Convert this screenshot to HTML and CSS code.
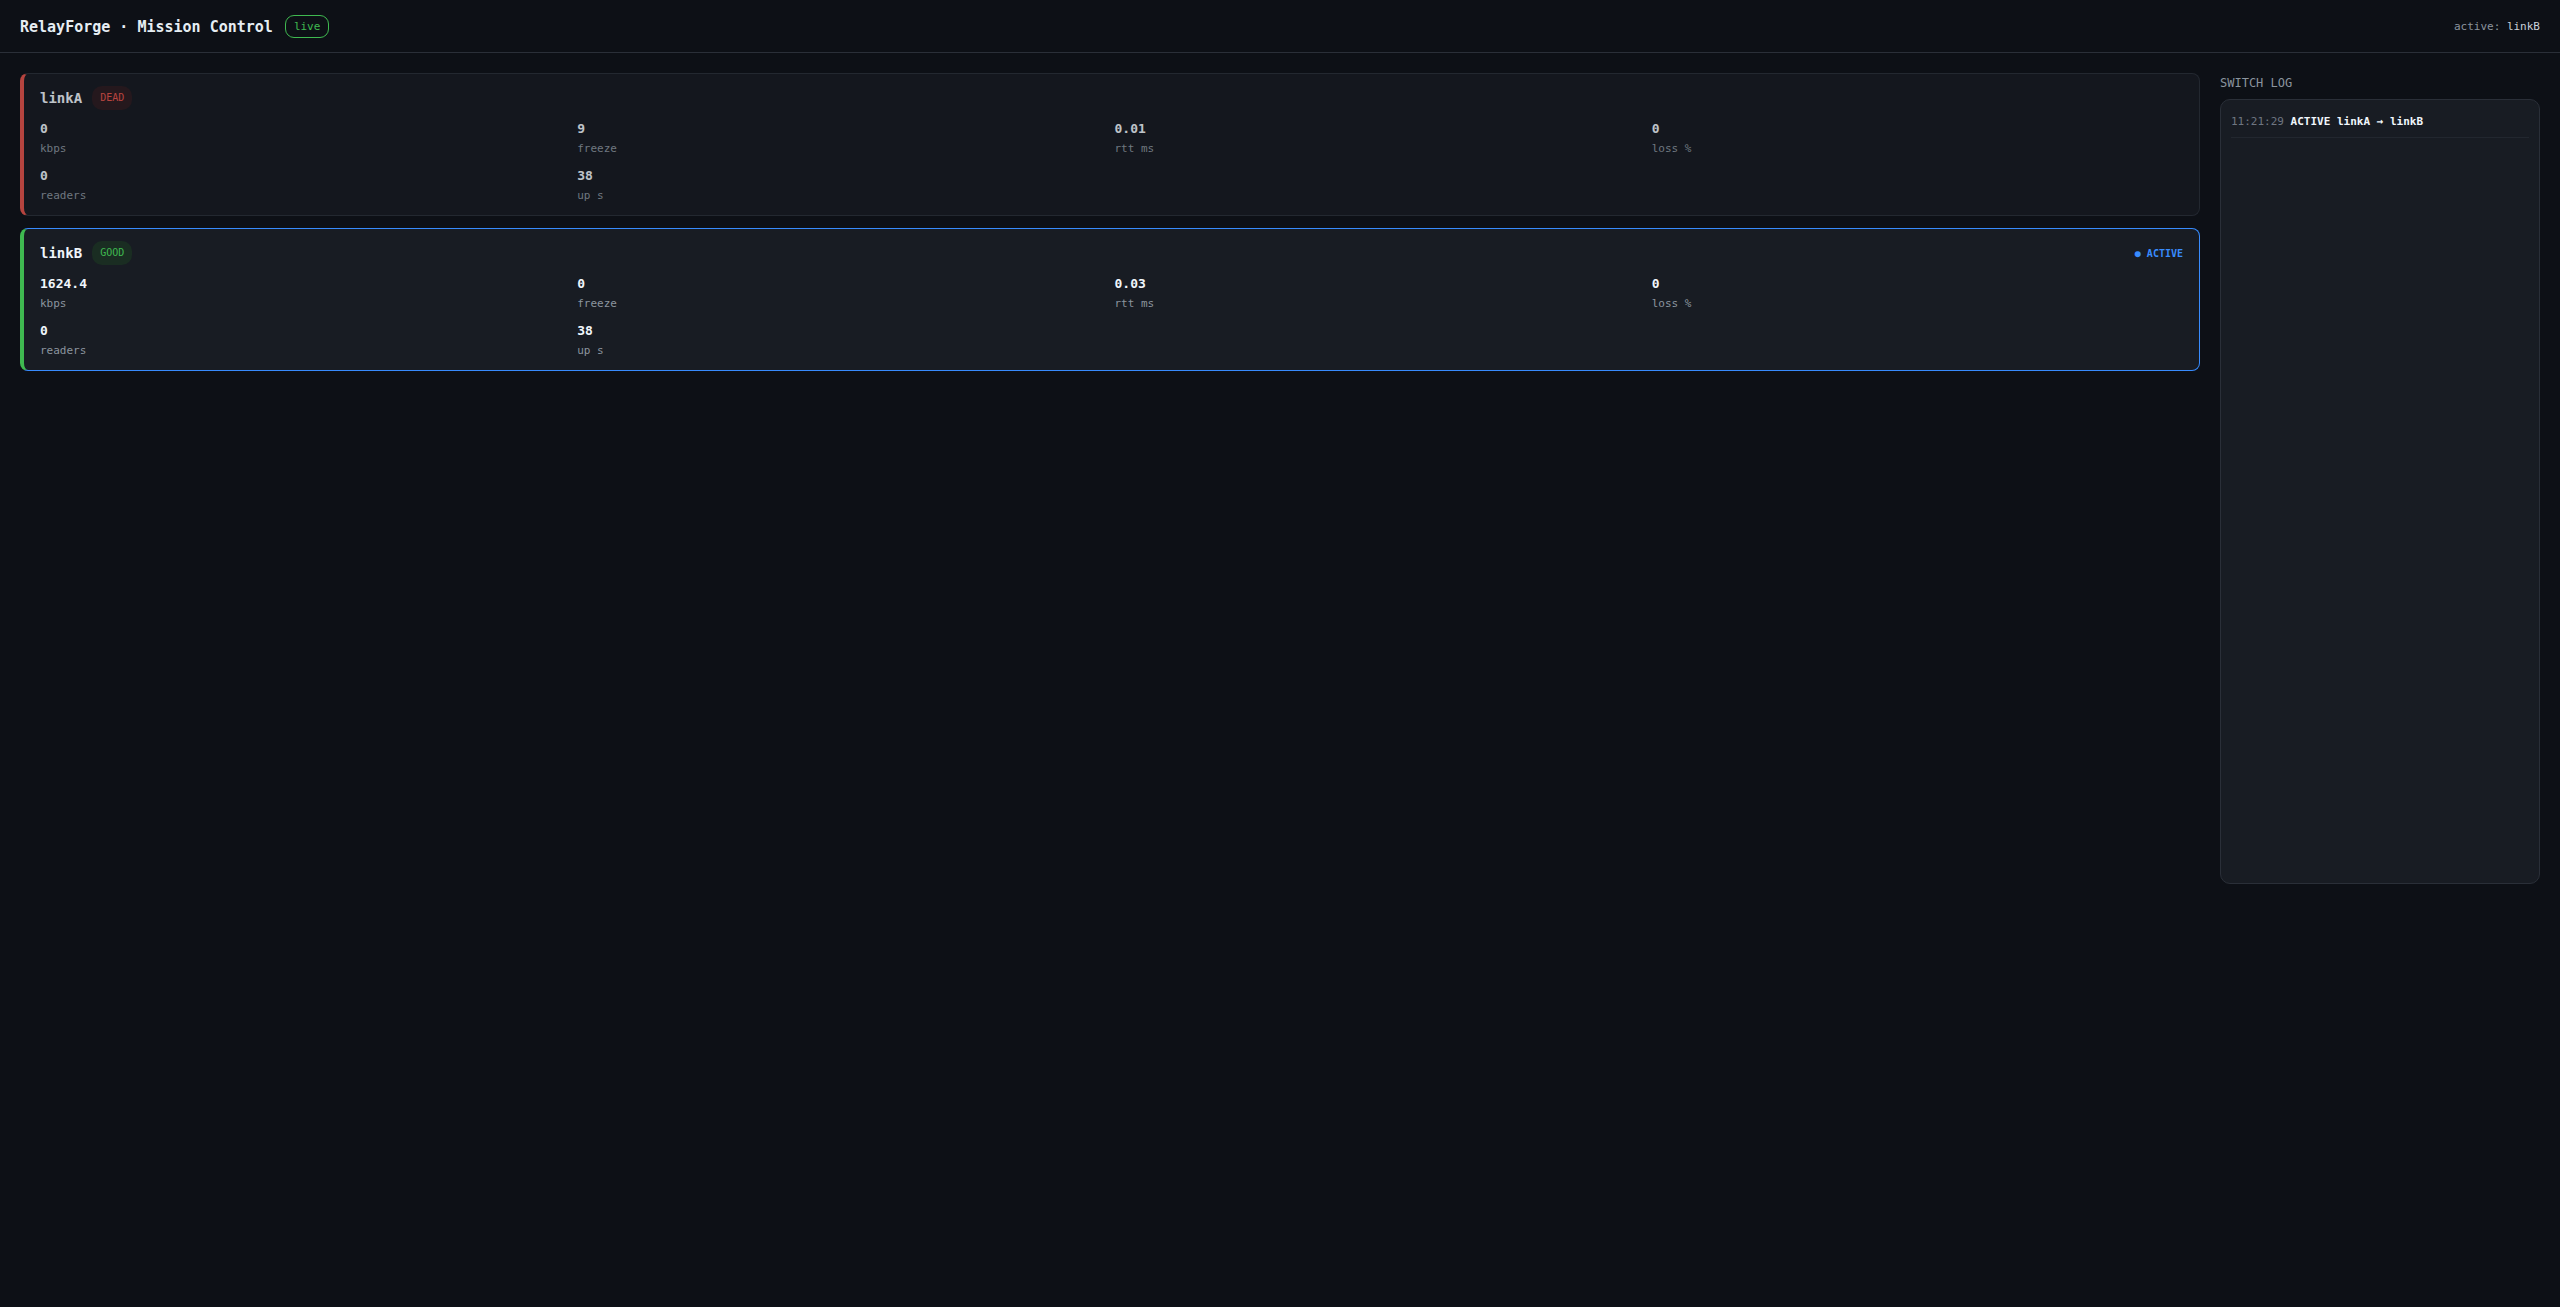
FILE: index.html
```html
<!DOCTYPE html>
<html lang="en">
<head>
    <meta charset="UTF-8">
    <meta name="viewport" content="width=device-width, initial-scale=1.0">
    <title>RelayForge · Mission Control</title>
    <link rel="stylesheet" href="styles.css">
</head>
<body>

    <header class="topbar">
        <h1>RelayForge · Mission Control</h1>
        <span class="live">live</span>
        <div class="active-link">active: <b>linkB</b></div>
    </header>

    <main class="layout">
        <section class="links">
            <div class="link dead">
                <div class="link-head">
                    <span class="link-name">linkA</span>
                    <span class="state state-dead">DEAD</span>
                </div>
                <div class="metrics">
                    <div class="metric"><div class="val">0</div><div class="lbl">kbps</div></div>
                    <div class="metric"><div class="val">9</div><div class="lbl">freeze</div></div>
                    <div class="metric"><div class="val">0.01</div><div class="lbl">rtt ms</div></div>
                    <div class="metric"><div class="val">0</div><div class="lbl">loss %</div></div>
                    <div class="metric"><div class="val">0</div><div class="lbl">readers</div></div>
                    <div class="metric"><div class="val">38</div><div class="lbl">up s</div></div>
                </div>
            </div>

            <div class="link good active">
                <div class="link-head">
                    <span class="link-name">linkB</span>
                    <span class="state state-good">GOOD</span>
                    <span class="active-tag">● ACTIVE</span>
                </div>
                <div class="metrics">
                    <div class="metric"><div class="val">1624.4</div><div class="lbl">kbps</div></div>
                    <div class="metric"><div class="val">0</div><div class="lbl">freeze</div></div>
                    <div class="metric"><div class="val">0.03</div><div class="lbl">rtt ms</div></div>
                    <div class="metric"><div class="val">0</div><div class="lbl">loss %</div></div>
                    <div class="metric"><div class="val">0</div><div class="lbl">readers</div></div>
                    <div class="metric"><div class="val">38</div><div class="lbl">up s</div></div>
                </div>
            </div>
        </section>

        <aside class="sidebar">
            <h2>SWITCH LOG</h2>
            <div class="log">
                <div class="log-row"><span class="ts">11:21:29</span> <span class="msg">ACTIVE linkA → linkB</span></div>
            </div>
        </aside>
    </main>

</body>
</html>
```

FILE: styles.css
```css
body {
    margin: 0;
    background-color: #0d1016;
    color: #e6edf3;
    font-family: "DejaVu Sans Mono", "Liberation Mono", monospace;
    font-size: 11px;
}
.topbar {
    display: flex;
    align-items: center;
    gap: 12px;
    padding: 15px 20px 14px;
    border-bottom: 1px solid #2a2f38;
}
.topbar h1 {
    margin: 0;
    font-size: 15px;
    line-height: 18px;
    font-weight: bold;
    color: #e6edf3;
}
.live {
    padding: 3px 8px;
    line-height: 15px;
    font-size: 11px;
    color: #3fb950;
    border: 1px solid #3fb950;
    border-radius: 9px;
}
.active-link {
    margin-left: auto;
    color: #8b949e;
}
.active-link b {
    font-weight: normal;
    color: #c9d1d9;
}
.layout {
    display: grid;
    grid-template-columns: 1fr 320px;
    gap: 20px;
    padding: 20px;
    align-items: start;
}
.links {
    display: flex;
    flex-direction: column;
    gap: 12px;
}
.link {
    background: #161a21;
    border: 1px solid #2a2f38;
    border-left: 4px solid #2a2f38;
    border-radius: 8px;
    padding: 12px 16px 12px;
}
.link.dead {
    border-left-color: #e5534b;
    opacity: .78;
}
.link.good {
    border-left-color: #3fb950;
}
.link.active {
    border-color: #388bfd;
    border-left-color: #3fb950;
    background: #181c23;
}
.link-head {
    display: flex;
    align-items: center;
    gap: 10px;
    height: 24px;
    margin-bottom: 11px;
}
.link-name {
    font-size: 14px;
    font-weight: bold;
    color: #f0f6fc;
}
.state {
    padding: 5px 8px;
    line-height: 14px;
    font-size: 10px;
    border-radius: 10px;
}
.state-dead {
    color: #e5534b;
    background: #2c1b1f;
}
.state-good {
    color: #3fb950;
    background: #1a2d22;
}
.active-tag {
    margin-left: auto;
    font-size: 10px;
    font-weight: bold;
    color: #388bfd;
}
.metrics {
    display: grid;
    grid-template-columns: repeat(4, 1fr);
    column-gap: 6px;
    row-gap: 12px;
}
.val {
    font-size: 13px;
    line-height: 16px;
    font-weight: bold;
    color: #f0f6fc;
}
.lbl {
    margin-top: 5px;
    line-height: 14px;
    color: #8b949e;
}
.sidebar h2 {
    margin: 2px 0 8px;
    font-size: 12px;
    line-height: 16px;
    font-weight: normal;
    color: #8b949e;
}
.log {
    height: 785px;
    box-sizing: border-box;
    padding: 10px;
    background: #181c23;
    border: 1px solid #2a2f38;
    border-radius: 10px;
}
.log-row {
    padding: 3px 0 7px;
    line-height: 17px;
    border-bottom: 1px solid #22272f;
}
.ts {
    color: #6e7681;
}
.msg {
    font-weight: bold;
    color: #f0f6fc;
}
```
